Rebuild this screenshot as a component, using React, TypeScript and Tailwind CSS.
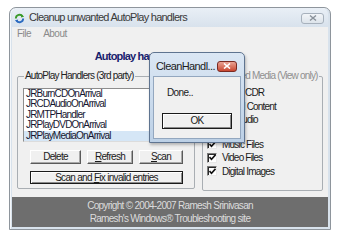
import React from "react";

const items = [
  "JRBurnCDOnArrival",
  "JRCDAudioOnArrival",
  "JRMTPHandler",
  "JRPlayDVDOnArrival",
  "JRPlayMediaOnArrival",
];

function Check() {
  return (
    <div className="w-[10px] h-[10px] bg-white border border-t-[#7a7a7a] border-l-[#7a7a7a] border-b-[#e8e8e8] border-r-[#e8e8e8] shadow-[inset_1px_1px_0_#2a2a2a] flex items-center justify-center">
      <svg width="7" height="7" viewBox="0 0 7 7">
        <path d="M0.5 3 L2.5 5.2 L6.5 0.8" stroke="#111" strokeWidth="1.6" fill="none" />
      </svg>
    </div>
  );
}

function Btn({ children, className = "", def = false }: { children: React.ReactNode; className?: string; def?: boolean }) {
  return (
    <div
      className={
        "flex items-center justify-center bg-[#f0f0f0] text-[10px] tracking-[-0.7px] text-[#1a1a1a] leading-none " +
        (def
          ? "border border-[#1a1a1a] shadow-[inset_1px_1px_0_#ffffff,inset_-1px_-1px_0_#8a8a8a] "
          : "border border-t-white border-l-white border-b-[#5a5a5a] border-r-[#5a5a5a] shadow-[inset_-1px_-1px_0_#a8a8a8] ") +
        className
      }
    >
      {children}
    </div>
  );
}

export default function App() {
  return (
    <div className="relative w-[340px] h-[241px] bg-white overflow-hidden pt-[7px] pl-[9px] font-['Liberation_Sans',Arial,sans-serif]">
      {/* main window */}
      <div className="w-[322px] h-[223px] border border-[#8e959c] rounded-t-[7px] bg-[#d8e2ec] flex flex-col px-[2px] pb-[2px] shadow-[inset_1px_1px_0_#f4f7fa]">
        <div className="h-[19px] flex items-center rounded-t-[6px] bg-gradient-to-b from-[#e9eff6] to-[#d8e2ec]">
          <svg width="11" height="11" viewBox="0 0 12 12" className="ml-[2px] mt-[1px]">
            <path d="M2 6 A4 4 0 0 1 9.5 4" stroke="#3a9a2a" strokeWidth="2" fill="none" />
            <path d="M10 6 A4 4 0 0 1 2.5 8" stroke="#2a6ac0" strokeWidth="2" fill="none" />
            <path d="M8 1.5 L11 4 L7.5 5 Z" fill="#3a9a2a" />
            <path d="M4 10.5 L1 8 L4.5 7 Z" fill="#2a6ac0" />
          </svg>
          <span className="ml-[4px] text-[11px] tracking-[-0.75px] text-[#3a3a3a]">Cleanup unwanted AutoPlay handlers</span>
          <div className="ml-auto mr-[4px] mt-[1px] w-[23px] h-[11px] rounded-[3px] border border-[#a7b1bc] bg-gradient-to-b from-[#f2f5f8] to-[#dde4eb] flex items-center justify-center">
            <svg width="8" height="6" viewBox="0 0 8 6">
              <path d="M1 0.5 L7 5.5 M7 0.5 L1 5.5" stroke="#8a929b" strokeWidth="1.4" />
            </svg>
          </div>
        </div>
        {/* client */}
        <div className="flex-1 bg-[#f0f0f0] flex flex-col">
          <div className="h-[13px] flex items-center gap-[12px] pl-[5px] text-[10px] tracking-[-0.5px] text-[#8a8a8a]">
            <span>File</span>
            <span>About</span>
          </div>
          <div className="mt-[10px] h-[12px] flex items-center justify-center pr-[4px] text-[11px] font-bold tracking-[-0.8px] text-[#17216c]">
            Autoplay handlers cleanup utility
          </div>
          <div className="mt-[8px] flex items-start gap-[7px] px-[5px] text-[10px] tracking-[-0.8px] text-[#1a1a1a]">
            <fieldset className="w-[178px] h-[119px] border border-[#a9aeb3] rounded-[2px]">
              <legend className="ml-[6px] px-[1px] leading-[12px] text-[#222]">AutoPlay Handlers (3rd party)</legend>
              <div className="pl-[5px] pt-[6px] flex flex-col">
                <div className="w-[162px] h-[54px] bg-white border border-t-[#8d8d8d] border-l-[#8d8d8d] border-b-[#dcdcdc] border-r-[#dcdcdc] flex flex-col">
                  {items.map((t, i) => (
                    <div
                      key={t}
                      className={"h-[10.4px] leading-[10.4px] pl-[2px] text-[#161630] " + (i === 4 ? "bg-[#d5e6f6]" : "")}
                    >
                      {t}
                    </div>
                  ))}
                </div>
                <div className="mt-[8px] ml-[7px] flex gap-[6px]">
                  <Btn className="w-[51px] h-[14px]">Delete</Btn>
                  <Btn className="w-[46px] h-[14px]">
                    <u className="underline-offset-1">R</u>efresh
                  </Btn>
                  <Btn className="w-[44px] h-[14px]">
                    <u className="underline-offset-1">S</u>can
                  </Btn>
                </div>
                <Btn def className="mt-[7px] ml-[7px] w-[153px] h-[13px]">
                  Scan and&nbsp;<u className="underline-offset-1">F</u>ix invalid entries
                </Btn>
              </div>
            </fieldset>
            <fieldset className="w-[121px] h-[121px] border border-[#a9aeb3] rounded-[2px]">
              <legend className="ml-[7px] px-[1px] leading-[12px] text-[#8f8f8f]">Supported Media (View only)</legend>
              <div className="pl-[4px] pt-[4px] flex flex-col">
                {["Blank CDR", "Mixed Content", "CD Audio"].map((t) => (
                  <div key={t} className="h-[13.5px] flex items-center gap-[5px]">
                    <Check />
                    <span>{t}</span>
                  </div>
                ))}
                <div className="h-[11px]" />
                {["Music Files", "Video Files", "Digital Images"].map((t) => (
                  <div key={t} className="h-[13.5px] flex items-center gap-[5px]">
                    <Check />
                    <span>{t}</span>
                  </div>
                ))}
              </div>
            </fieldset>
          </div>
          <div className="mt-auto h-[30px] bg-[#6e6e6e] flex flex-col items-center justify-center gap-[1px] text-[10px] tracking-[-0.7px] text-[#dcdcdc] leading-[12px]">
            <span>Copyright © 2004-2007 Ramesh Srinivasan</span>
            <span>Ramesh's Windows® Troubleshooting site</span>
          </div>
        </div>
      </div>

      {/* modal dialog */}
      <div className="absolute left-[149px] top-[52px] w-[96px] h-[91px] border border-[#5f7490] rounded-t-[5px] bg-gradient-to-b from-[#dbe7f4] to-[#bcd0e6] flex flex-col px-[3px] pb-[3px] shadow-[1px_2px_3px_rgba(0,0,0,0.25)]">
        <div className="h-[23px] flex items-center">
          <span className="ml-[3px] mt-[4px] text-[11px] tracking-[-0.6px] text-[#1c1c1c]">CleanHandl...</span>
          <div className="ml-auto mr-[4px] mt-[3px] w-[20px] h-[11px] rounded-[3px] border border-[#7a2a22] bg-gradient-to-b from-[#e9a394] to-[#c8452f] flex items-center justify-center">
            <svg width="8" height="6" viewBox="0 0 8 6">
              <path d="M1 0.5 L7 5.5 M7 0.5 L1 5.5" stroke="#ffffff" strokeWidth="1.6" />
            </svg>
          </div>
        </div>
        <div className="flex-1 bg-[#f0f0f0] border border-[#93a7bf] flex flex-col">
          <span className="mt-[10px] ml-[13px] text-[10px] tracking-[-0.6px] leading-[12px] text-[#1a1a1a]">Done..</span>
          <Btn def className="mt-[14px] ml-[8px] w-[70px] h-[16px]">OK</Btn>
        </div>
      </div>
    </div>
  );
}
